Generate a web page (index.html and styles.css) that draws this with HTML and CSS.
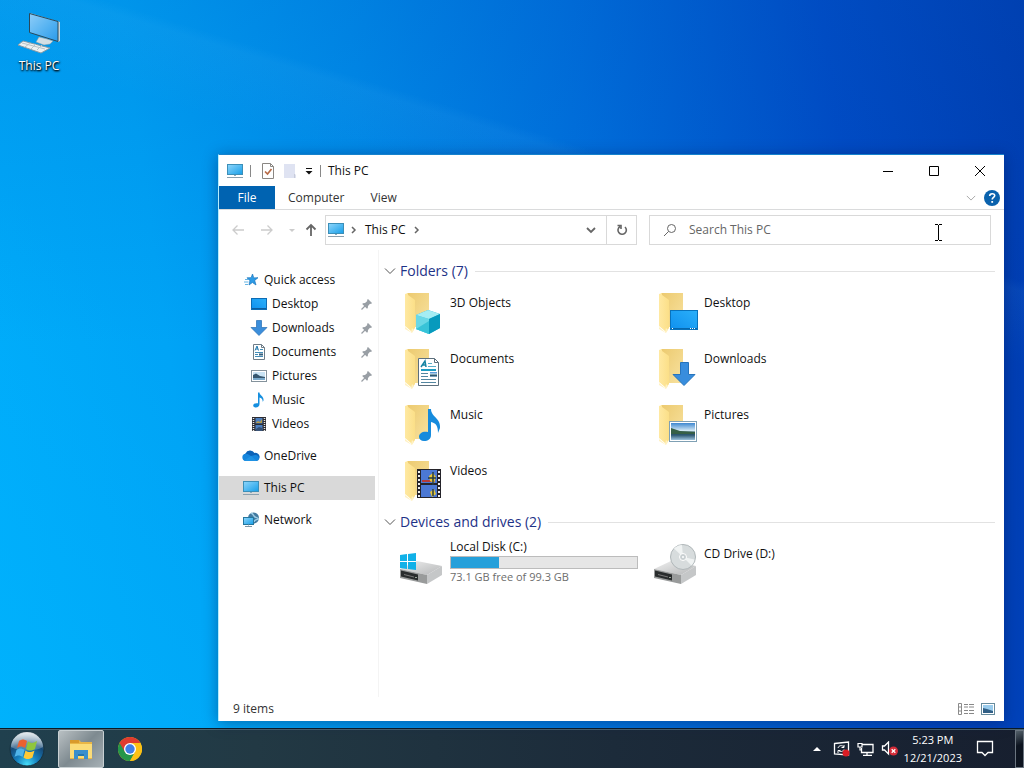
FILE: index.html
```html
<!DOCTYPE html>
<html lang="en">
<head>
<meta charset="utf-8">
<title>This PC</title>
<link rel="stylesheet" href="styles.css">
</head>
<body>
<svg class="defs" width="0" height="0" aria-hidden="true">
  <defs>
    <linearGradient id="g-screen" x1="0" y1="0" x2="1" y2="1"><stop offset="0" stop-color="#8fd6fb"/><stop offset="1" stop-color="#169ee8"/></linearGradient>
    <linearGradient id="g-monitor" x1="0" y1="0" x2="1" y2="1"><stop offset="0" stop-color="#8fcdf8"/><stop offset=".5" stop-color="#5ab5f2"/><stop offset="1" stop-color="#2a9aea"/></linearGradient>
    <linearGradient id="g-blue" x1="0" y1="1" x2="1" y2="0"><stop offset="0" stop-color="#0f90ee"/><stop offset="1" stop-color="#2bb0fa"/></linearGradient>
    <linearGradient id="g-fold" x1="0" y1="0" x2="1" y2="0"><stop offset="0" stop-color="#ffe9a2"/><stop offset="1" stop-color="#fbdf88"/></linearGradient>
    <linearGradient id="g-back" x1="0" y1="0" x2="1" y2="1"><stop offset="0" stop-color="#ecca6f"/><stop offset="1" stop-color="#f8e2a0"/></linearGradient>
    <linearGradient id="g-photo" x1="0" y1="0" x2="0" y2="1"><stop offset="0" stop-color="#3d87d0"/><stop offset=".45" stop-color="#d4e9f5"/><stop offset=".55" stop-color="#345f68"/><stop offset=".7" stop-color="#2b5570"/><stop offset="1" stop-color="#9bc2dc"/></linearGradient>
    <linearGradient id="g-drive" x1="0" y1="0" x2="1" y2="1"><stop offset="0" stop-color="#f0f0f0"/><stop offset="1" stop-color="#b4b6b7"/></linearGradient>
    <radialGradient id="g-orb" cx=".5" cy=".95" r=".9"><stop offset="0" stop-color="#45dcf8"/><stop offset=".35" stop-color="#1681c0"/><stop offset=".7" stop-color="#164a78"/><stop offset="1" stop-color="#7d9cae"/></radialGradient>
    <linearGradient id="g-gloss" x1="0" y1="0" x2="0" y2="1"><stop offset="0" stop-color="#fff" stop-opacity=".8"/><stop offset="1" stop-color="#fff" stop-opacity=".15"/></linearGradient>
  </defs>
  <symbol id="pc" viewBox="0 0 18 16">
    <rect x="1.500" y="1.500" width="15" height="10" fill="url(#g-screen)" stroke="#3c8fb8"/>
    <path d="M8 12h2v1H8z" fill="#8ba9bb"/><path d="M1 14.500h16" stroke="#8ba0ae"/>
  </symbol>
  <symbol id="star" viewBox="0 0 16 16">
    <path d="M9.500 2l1.300 3.900 4.200-.2-3.300 2.700 1.300 4.600-3.600-2.500L6 13l.9-4.300-2.900-2.900 4.100-.1z" fill="#2d9be6" stroke="#1b76bd" stroke-width=".7"/>
    <path d="M2 7.500h3M1 10h4.500M2 12.500h3" stroke="#66b5e5"/>
  </symbol>
  <symbol id="desk" viewBox="0 0 18 16">
    <rect x="1.500" y="2.500" width="15" height="11" fill="url(#g-blue)" stroke="#0d6cb4"/>
    <path d="M2 12.500h14" stroke="#0d5c9d"/>
  </symbol>
  <symbol id="down" viewBox="0 0 18 16"><path d="M6.500 .5h5v7H17L9 15.500 1 7.500h5.500z" fill="#3b8edb" stroke="#256fb5" stroke-width=".7"/></symbol>
  <symbol id="doc" viewBox="0 0 18 16">
    <path d="M3.500.5h8l3 3v12h-11z" fill="#fff" stroke="#6e7d88"/><path d="M11.500.5v3h3" fill="none" stroke="#6e7d88"/>
    <path d="M5 6.500L7 2l1.500 4.500M6 5h2" fill="none" stroke="#2179ae"/><path d="M10 5.500h3M5 8.500h8M5 10.500h3M5 12.500h8" stroke="#438db7"/><rect x="9" y="9.500" width="4" height="2" fill="#355f7c"/>
  </symbol>
  <symbol id="pic" viewBox="0 0 18 16">
    <rect x="1.500" y="2.500" width="15" height="11" fill="#fff" stroke="#84929c"/><rect x="3" y="4" width="12" height="8" fill="#c9e3f4"/>
    <path d="M3 7l3-1.500 4 2.500 5 1v1H3z" fill="#35566f"/><path d="M3 10h12v2H3z" fill="#79a9cb"/>
  </symbol>
  <symbol id="music" viewBox="0 0 18 16"><path d="M8 .5h1.500c0 3 4.500 3.500 4 8l-.8 1.500C13 7.500 11.500 6 9.500 5.500V12c0 2-1.500 3.500-3.700 3.500-1.500 0-2.600-.8-2.600-2 0-1.600 2-2.600 4.800-2.200z" fill="#168fdf"/></symbol>
  <symbol id="film" viewBox="0 0 18 16">
    <path d="M2 1h14v14H2z" fill="#2c2c32"/><path d="M3.500 2v13M14.500 2v13" stroke="#e7e7e7" stroke-width="1.500" stroke-dasharray="1 1"/>
    <path d="M5.500 2h7v5.500h-7zM5.500 9h7v5.500h-7z" fill="#4c7fc0"/><path d="M6 6.500l2-1.500 2 1 2-3v4H6z" fill="#b59b4c"/><path d="M6 13l3-2 3 1v2H6z" fill="#334f73"/>
  </symbol>
  <symbol id="cloud" viewBox="0 0 18 16">
    <path d="M4 13a4 4 0 0 1-.5-7.500A5 5 0 0 1 12.500 5 4 4 0 0 1 14.500 13z" fill="#0c63b8"/>
    <path d="M4 13a3.600 3.600 0 0 1 0-7.300c2 0 3 1 5 2.300l3-.8c3-.8 5 .8 5 3A2.800 2.800 0 0 1 14.500 13z" fill="#1686dd"/>
    <path d="M2 12.500L9 8l6 5H4z" fill="#1f92e4"/>
  </symbol>
  <symbol id="net" viewBox="0 0 18 16">
    <circle cx="11.500" cy="6" r="5.500" fill="#427aa0"/><path d="M9 1c3 1 2 3 4 4s4 1 3 3M12 10c0-2 2-2 4-3" stroke="#9dcce4" fill="none" stroke-width="1.500"/>
    <rect x="1.500" y="5.500" width="10" height="7" fill="url(#g-screen)" stroke="#24779f"/><path d="M3 14.500h7M6 13h1" stroke="#7e96a5"/>
  </symbol>
  <symbol id="pin" viewBox="0 0 12 12"><path d="M7 1l4 4-1 1-1-.3L7 8l-.2 2L6 10.800 1.200 6 2 5.200 4 5l2.300-2L6 2z" fill="#999fa5"/><path d="M4 8L.5 11.500" stroke="#999fa5" stroke-width="1.300"/></symbol>
  <symbol id="folder" viewBox="0 -1 48 48">
    <path d="M11 4h22v34H16z" fill="url(#g-back)"/><path d="M9 5l3-1v2l7 5v28l-3 4-1-1-6-5z" fill="url(#g-fold)"/>
    <path d="M9 38l6 5 1-4 2 2-2 3-7-4z" fill="#fff1c2"/>
  </symbol>
  <symbol id="drive" viewBox="0 1 48 48">
    <path d="M4 31l17-8 25 5-15 9z" fill="url(#g-drive)"/><path d="M4 31l27 6v9L4 40z" fill="#999b9b"/><path d="M31 37l15-9v9l-15 9z" fill="#c5c7c8"/>
    <path d="M5 32.500l17 4v6L5 38.500z" fill="#292c2d"/><path d="M8 36.500l10 2.500" stroke="#777"/><path d="M19 39.500h2" stroke="#9aa79a"/>
  </symbol>
  <symbol id="chev" viewBox="0 0 12 12"><path d="M1 3.500l5 5 5-5" fill="none" stroke="currentColor"/></symbol>
</svg>

<main class="desktop">
  <a class="shortcut" href="#">
    <svg width="48" height="48" viewBox="0 0 48 48" aria-hidden="true">
      <path d="M15 3l30 9v19l-2 1z" fill="#c6d6dc"/><path d="M14.500 3.500l28.500 8v20l-28.500-9z" fill="url(#g-monitor)" stroke="#29495b"/>
      <path d="M24 27l8 2 6 2-3 3-6 1-8-3z" fill="#d4dfe4" stroke="#8d9ba2" stroke-width=".5"/>
      <path d="M8 31l27 7-9 5L3 35z" fill="#edf1f1" stroke="#889ba6"/><path d="M7 33l23 6M15 33l-5 4m11-3-5 5m11-4-5 5" stroke="#b8c3c8"/>
    </svg>
    <span>This PC</span>
  </a>

  <section class="window" aria-label="This PC">
    <header class="titlebar">
      <svg class="i18" aria-hidden="true"><use href="#pc"/></svg><i class="sep"></i>
      <button class="quick" aria-label="Properties"><svg width="14" height="16" viewBox="0 0 14 16"><path d="M1.500.5h8l3 3v12h-11z" fill="#fff" stroke="#8a8783"/><path d="M9.500.5v3h3" fill="none" stroke="#8a8783"/><path d="M4 8.500l2.500 2.500L10.500 6" fill="none" stroke="#b76b47" stroke-width="1.700"/></svg></button>
      <button class="quick" aria-label="New folder"><svg width="14" height="16" viewBox="0 0 14 16"><path d="M1 1h11v10l1 1v3H1z" fill="#dfe3f2"/><path d="M11.500 11v4" stroke="#c7cbd9"/></svg></button>
      <button class="quick narrow" aria-label="Customize toolbar"><svg width="8" height="8" viewBox="0 0 8 8"><path d="M1 1.500h6" stroke="#111"/><path d="M.5 4h7L4 7.500z" fill="#111"/></svg></button>
      <i class="sep second"></i><h1>This PC</h1>
      <div class="controls">
        <button aria-label="Minimize"><svg width="12" height="12"><path d="M1 6.500h10" stroke="#000"/></svg></button>
        <button aria-label="Maximize"><svg width="12" height="12"><path d="M1.500 1.500h9v9h-9z" fill="none" stroke="#000"/></svg></button>
        <button aria-label="Close"><svg width="12" height="12"><path d="M1 1l10 10M11 1L1 11" stroke="#000"/></svg></button>
      </div>
    </header>
    <nav class="ribbon">
      <button class="file">File</button><button>Computer</button><button>View</button>
      <div class="ribbon-end">
        <button aria-label="Expand ribbon"><svg width="10" height="10"><use href="#chev"/></svg></button>
        <button aria-label="Help"><svg width="16" height="16" viewBox="0 0 16 16"><circle cx="8" cy="8" r="8" fill="#0a62ad"/><path d="M5.700 6c0-3 5-3 5-.4C10.700 7.400 8.200 7.300 8.200 9.500" fill="none" stroke="#fff" stroke-width="1.600"/><path d="M7.300 11h1.800v1.800H7.300z" fill="#fff"/></svg></button>
      </div>
    </nav>
    <div class="address-row">
      <div class="history">
        <button class="faint" aria-label="Back"><svg width="14" height="12"><path d="M13 6H2m4.500-4.500L2 6l4.500 4.500" fill="none" stroke="currentColor" stroke-width="1.300"/></svg></button>
        <button class="faint" aria-label="Forward"><svg width="14" height="12"><path d="M1 6h11M7.500 1.500L12 6l-4.500 4.500" fill="none" stroke="currentColor" stroke-width="1.300"/></svg></button>
        <button class="faint" aria-label="Recent locations"><svg width="6" height="6"><path d="M0 2l3 3 3-3z" fill="currentColor"/></svg></button>
        <button class="up" aria-label="Up"><svg width="12" height="14"><path d="M6 13V2M1.500 6.500L6 2l4.500 4.500" fill="none" stroke="currentColor" stroke-width="1.800"/></svg></button>
      </div>
      <div class="address">
        <svg class="i18" aria-hidden="true"><use href="#pc"/></svg>
        <svg class="crumb" width="6" height="8"><path d="M1 1l3 3-3 3" fill="none" stroke="currentColor" stroke-width="1.500"/></svg>
        <a href="#">This PC</a>
        <svg class="crumb" width="6" height="8"><path d="M1 1l3 3-3 3" fill="none" stroke="currentColor" stroke-width="1.500"/></svg>
        <button class="drop" aria-label="Previous locations"><svg width="10" height="8"><path d="M1 2l4 4 4-4" fill="none" stroke="currentColor" stroke-width="1.800"/></svg></button>
        <button class="refresh" aria-label="Refresh"><svg width="12" height="12"><path d="M9 3a4.200 4.200 0 1 1-5-.5M1.500 1.500H5V5" fill="none" stroke="currentColor" stroke-width="1.600"/></svg></button>
      </div>
      <label class="search">
        <svg width="14" height="14"><circle cx="8.500" cy="5.500" r="4" fill="none" stroke="currentColor"/><path d="M5.500 8.500L1 13" stroke="currentColor"/></svg>
        <input type="text" placeholder="Search This PC" aria-label="Search This PC">
      </label>
    </div>

    <div class="body">
      <nav class="sidebar">
        <a href="#"><svg class="i18"><use href="#star"/></svg><span>Quick access</span></a>
        <a class="sub" href="#"><svg class="i18"><use href="#desk"/></svg><span>Desktop</span><svg class="pin"><use href="#pin"/></svg></a>
        <a class="sub" href="#"><svg class="i18"><use href="#down"/></svg><span>Downloads</span><svg class="pin"><use href="#pin"/></svg></a>
        <a class="sub" href="#"><svg class="i18"><use href="#doc"/></svg><span>Documents</span><svg class="pin"><use href="#pin"/></svg></a>
        <a class="sub" href="#"><svg class="i18"><use href="#pic"/></svg><span>Pictures</span><svg class="pin"><use href="#pin"/></svg></a>
        <a class="sub" href="#"><svg class="i18"><use href="#music"/></svg><span>Music</span></a>
        <a class="sub" href="#"><svg class="i18"><use href="#film"/></svg><span>Videos</span></a>
        <a class="root" href="#"><svg class="i18"><use href="#cloud"/></svg><span>OneDrive</span></a>
        <a class="root current" href="#"><svg class="i18"><use href="#pc"/></svg><span>This PC</span></a>
        <a class="root" href="#"><svg class="i18"><use href="#net"/></svg><span>Network</span></a>
      </nav>
      <div class="content">
        <h2><svg width="12" height="12"><use href="#chev"/></svg>Folders (7)</h2>
        <div class="tiles">
          <a href="#"><svg class="i48" viewBox="0 0 48 48"><use href="#folder"/><path d="M20 27l12-5 12 4v14l-11 6-13-5z" fill="#1eb0d3"/><path d="M20 27l13 4v15l-13-5z" fill="#69d8e6"/><path d="M20 27l12-5 12 4-11 5z" fill="#a5edf3"/><path d="M33 31l11-5v14l-11 6z" fill="#079abd"/><path d="M20 41l13-8v13z" fill="#37c3d8"/></svg><span>3D Objects</span></a>
          <a href="#"><svg class="i48" viewBox="0 0 48 48"><use href="#folder"/><rect x="20.500" y="22.500" width="27" height="19" fill="url(#g-blue)" stroke="#0872bc"/><path d="M21 40.500h26" stroke="#0768ae"/><path d="M22 40.500h1m17 0h1m1 0h1m1 0h1" stroke="#fff"/></svg><span>Desktop</span></a>
          <a href="#"><svg class="i48" viewBox="0 0 48 48"><use href="#folder"/><path d="M22.500 14.500h16l4 4v23h-20z" fill="#fff" stroke="#5c6f7d"/><path d="M38.500 14.500v4h4" fill="none" stroke="#5c6f7d"/><path d="M25 23l4-6 1 6m-4-2h4" fill="none" stroke="#1785a3" stroke-width="1.500"/><path d="M32 19.500h4M32 22.500h8" stroke="#5bacc8"/><path d="M25 26h15" stroke="#1d9bc1" stroke-width="2"/><path d="M25 29.500h7m-7 3h7m-7 3h15m-15 3h15" stroke="#5386a0"/><rect x="34" y="28" width="7" height="5" fill="url(#g-photo)"/></svg><span>Documents</span></a>
          <a href="#"><svg class="i48" viewBox="0 0 48 48"><use href="#folder"/><path d="M30.500 18.500h8v12H45L34 41.500 23 30.500h7.500z" fill="#388ddd" stroke="#2674bd"/></svg><span>Downloads</span></a>
          <a href="#"><svg class="i48" viewBox="0 0 48 48"><use href="#folder"/><path d="M32 9h3c0 8 10 9 9 19l-2 5c0-7-2-10-7-11v13c0 4-3 6-7 6-3 0-5-2-5-4 0-4 4-6 9-5z" fill="#168bdd"/></svg><span>Music</span></a>
          <a href="#"><svg class="i48" viewBox="0 0 48 48"><use href="#folder"/><rect x="19.500" y="21.500" width="27" height="20" fill="#fff" stroke="#7fa0b4"/><rect x="21" y="23" width="24" height="17" fill="url(#g-photo)"/><path d="M21 28l9 3 15 1v2H21z" fill="#365f46"/></svg><span>Pictures</span></a>
          <a href="#"><svg class="i48" viewBox="0 0 48 48"><use href="#folder"/><path d="M21 13h24v29H21z" fill="#24232a"/><path d="M23 15v27M43 15v27" stroke="#eee" stroke-width="2" stroke-dasharray="2 2"/><path d="M25 14h16v13H25zM25 29h16v12H25z" fill="#4b78d4"/><path d="M26 25h13" stroke="#b53b39" stroke-width="2"/><path d="M33 20l4-3 3 4-2 6-4-2zM34 36l4-3 2 5-4 3z" fill="#e7c637"/><path d="M37 16v13M32 22h8M37 33v7" stroke="#263c43" stroke-width="1.500"/></svg><span>Videos</span></a>
        </div>
        <h2><svg width="12" height="12"><use href="#chev"/></svg>Devices and drives (2)</h2>
        <div class="tiles drives">
          <a href="#"><svg class="i48" viewBox="0 0 48 48"><use href="#drive"/><path d="M4 16l7-1v7H4zM12 15l8-1v8h-8zM4 23h7v7l-7-1zM12 23h8v8l-8-1z" fill="#10b1e8"/></svg><span class="disk">Local Disk (C:)<i class="bar"><i></i></i><small>73.1 GB free of 99.3 GB</small></span></a>
          <a class="cd" href="#"><svg class="i48" viewBox="0 0 48 48"><use href="#drive"/><circle cx="33" cy="18" r="12.500" fill="#d7dcdd" stroke="#b0b7b9"/><path d="M33 18L24 9.500a12 12 0 0 1 8-3.500z" fill="#f0f3f3"/><path d="M33 18l8.500 8.500a12 12 0 0 0 3-6z" fill="#f0f3f3"/><circle cx="33" cy="18" r="3.500" fill="#c8cfd1" stroke="#fff"/><circle cx="33" cy="18" r="1" fill="#fff"/></svg><span>CD Drive (D:)</span></a>
        </div>
      </div>
    </div>
    <footer class="status">
      <span>9 items</span>
      <button aria-label="Details view"><svg width="16" height="14" viewBox="0 0 16 14"><path d="M.5 1.500h3v11h-3zM.5 5h3M.5 9h3" fill="none" stroke="#8b8b8b"/><path d="M6 2.500h4m1 0h5M6 5h4m1 0h5M6 8.500h4m1 0h5M6 11.500h4m1 0h5" stroke="#888"/></svg></button>
      <button aria-label="Large icons view"><svg width="14" height="12" viewBox="0 0 14 12"><rect x=".5" y=".5" width="13" height="11" fill="#fff" stroke="#668b9d"/><rect x="2" y="2" width="10" height="8" fill="#9acced"/><path d="M2 5l4 1 6 2v2H2z" fill="#315f86"/></svg></button>
    </footer>
  </section>
  <svg class="cursor" width="9" height="17" viewBox="0 0 9 17" aria-hidden="true"><path d="M1 .5h3m1 0h3M4.500 1v15M1 16.500h3m1 0h3" stroke="#000"/></svg>
</main>

<footer class="taskbar">
  <button class="start" aria-label="Start"><svg width="38" height="38" viewBox="0 0 38 38"><circle cx="19" cy="19" r="17" fill="url(#g-orb)" stroke="#16313f"/><path d="M3 17a16 15 0 0 1 32 0c-9 5-22 5-32 0z" fill="url(#g-gloss)"/>
    <path d="M11 11c3-2 5-2 8 0l-2 7c-3-2-5-2-8 0z" fill="#ec6130"/><path d="M20 11.500c3 2 5 2 9-.5l-2 8c-4 2-6 2-9 0z" fill="#8fc63e"/><path d="M8.500 20c3-2 5-2 8 0l-2 7c-3-2-5-2-8 0z" fill="#50b4e9"/><path d="M17.500 20.500c3 2 5 2 9 0l-2 7c-4 2-6 2-9 0z" fill="#ffc936"/></svg></button>
  <button class="task active" aria-label="File Explorer"><svg width="24" height="22" viewBox="0 0 24 22"><path d="M1 2h9l2 2h11v17H1z" fill="#e9b646"/><path d="M1 2h9v3H1z" fill="#d99a2b"/><path d="M1 6h22v14H1z" fill="#fbdc78"/><path d="M5 12h14v9h-4v-5H9v5H5z" fill="#398fcd"/><path d="M9 16h6v2H9z" fill="#2677ad"/></svg></button>
  <button class="task" aria-label="Google Chrome"><svg width="24" height="24" viewBox="0 0 24 24"><circle cx="12" cy="12" r="12" fill="#fbc116"/><path d="M12 12L1.600 6A12 12 0 0 0 12 24l5-9z" fill="#25964a"/><path d="M1.600 6a12 12 0 0 1 20.800 0H12v6l-5 3z" fill="#df3b2f"/><path d="M12 6h10.400A12 12 0 0 1 12 24l5.200-9z" fill="#fbc116"/><circle cx="12" cy="12" r="6" fill="#fff"/><circle cx="12" cy="12" r="4.700" fill="#3f7fe8"/></svg></button>
  <div class="tray">
    <button aria-label="Show hidden icons"><svg width="8" height="4"><path d="M0 4l4-4 4 4z" fill="#fff"/></svg></button>
    <button aria-label="Security"><svg width="17" height="16" viewBox="0 0 17 16"><path d="M1.500 2.500L15.500 1v13l-14-1z" fill="none" stroke="#fff" stroke-width="1.300"/><path d="M5 7c1-3 4-3 6-1M11 4v2.500H8.500M11 8.500c-1 2.500-4 2.500-5.500 1M5 12V9.500h2.500" fill="none" stroke="#fff"/><circle cx="13" cy="12" r="3.500" fill="#d91d25"/></svg></button>
    <button aria-label="Network"><svg width="17" height="14" viewBox="0 0 17 14"><path d="M5 2.500h11v8H4.500V6M10 11v2M6 13.500h9" fill="none" stroke="#fff" stroke-width="1.300"/><path d="M1 1.500h4v3.500H1zM3 5v3h2" fill="none" stroke="#fff" stroke-width="1.200"/></svg></button>
    <button aria-label="Volume muted"><svg width="18" height="15" viewBox="0 0 18 15"><path d="M1.500 5h2l4-4v12l-4-4h-2z" fill="none" stroke="#fff" stroke-width="1.300"/><circle cx="12.500" cy="10" r="4.500" fill="#d32c38"/><path d="M10.700 8.200l3.600 3.600m0-3.600l-3.600 3.600" stroke="#fff" stroke-width="1.300"/></svg></button>
    <time datetime="2023-12-21T17:23">5:23 PM<br>12/21/2023</time>
    <button class="notice" aria-label="Notifications"><svg width="18" height="17" viewBox="0 0 18 17"><path d="M1.500 1.500h15v11H12L9 15.500l-3-3H1.500z" fill="none" stroke="#fff" stroke-width="1.300"/></svg></button>
    <button class="show" aria-label="Show desktop"></button>
  </div>
</footer>
</body>
</html>
```
FILE: styles.css
```css
* { box-sizing: border-box; }
body {
  margin: 0;
  height: 100vh;
  display: flex;
  flex-direction: column;
  overflow: hidden;
  font: 12px/16px "Open Sans", "Noto Sans", sans-serif;
  color: #111;
  background:
    linear-gradient(197deg, rgba(120, 210, 255, 0) 26%, rgba(120, 210, 255, .06) 27%, rgba(120, 210, 255, 0) 34%),
    linear-gradient(50deg, rgba(0, 190, 255, .35), rgba(0, 190, 255, 0) 30%),
    linear-gradient(180deg, rgba(0, 90, 190, .2), rgba(0, 90, 190, 0) 45%),
    linear-gradient(82deg, #00acfb 0%, #00a4f6 20%, #008cea 40%, #006edc 60%, #0049c4 82%, #003aae 100%);
}
button { border: 0; padding: 0; background: none; font: inherit; color: inherit; display: flex; align-items: center; justify-content: center; }
a { color: inherit; text-decoration: none; }
svg { flex: none; display: block; }
.defs { position: absolute; }
.i18 { width: 18px; height: 16px; }
.i48 { width: 48px; height: 48px; overflow: visible; }

.desktop { position: relative; flex: 1; min-height: 0; }
.shortcut { display: flex; flex-direction: column; align-items: center; width: 78px; padding-top: 10px; color: #fff; text-shadow: 1px 1px 2px #000, 0 1px 2px #000; }
.window {
  position: absolute;
  inset: 154px 20px 7px 218px;
  display: flex;
  flex-direction: column;
  background: #fff;
  border: 1px solid #1682cc;
  border-width: 1px 0 0 1px;
  border-left-color: #b5edfc;
  box-shadow: 0 2px 14px rgba(0, 20, 70, .4);
}
.titlebar { display: flex; align-items: center; height: 31px; padding-left: 7px; }
.sep { width: 1px; height: 12px; margin: 0 6px; background: #888; }
.sep.second { margin: 0 7px 0 3px; }
.quick { width: 22px; height: 22px; }
.quick.narrow { width: 16px; }
h1 { margin: 0; font-size: 12px; font-weight: 400; }
.controls { display: flex; align-self: stretch; margin-left: auto; }
.controls button { width: 46px; }
.controls button:last-child { margin-right: 1px; }
.ribbon { display: flex; height: 24px; border-bottom: 1px solid #dadbdc; color: #333; }
.ribbon button { padding: 0 13px; }
.ribbon .file { width: 56px; background: #0063b1; color: #fff; }
.ribbon-end { display: flex; gap: 8px; margin-left: auto; padding-right: 4px; color: #999; }
.ribbon-end button { padding: 0; }
.address-row { display: flex; padding: 5px 13px 5px 12px; color: #666; }
.history { display: flex; align-items: center; gap: 15px; width: 94px; color: #666; }
.history .faint { color: #ccc; }
.history .up { margin-left: -5px; }
.address { flex: 309; display: flex; align-items: center; height: 30px; padding-left: 1px; border: 1px solid #d9d9d9; }
.address a { color: #111; margin-right: 8px; }
.crumb { margin-left: 6px; margin-right: 8px; }
.address a + .crumb { margin-left: 0; }
.drop { margin-left: auto; padding: 0 10px; height: 28px; }
.refresh { width: 30px; height: 28px; border-left: 1px solid #d9d9d9; }
.search { flex: 327; display: flex; align-items: center; gap: 12px; height: 30px; margin-left: 12px; padding-left: 13px; border: 1px solid #d9d9d9; }
.search input { flex: 1; min-width: 0; border: 0; padding: 0; outline: 0; background: none; font: inherit; }
.search input::placeholder { color: #666; opacity: 1; }
.body { flex: 1; min-height: 0; display: flex; }
.sidebar { width: 160px; padding: 18px 3px 0 0; border-right: 1px solid #f4f4f4; }
.sidebar a { display: flex; align-items: center; gap: 4px; height: 24px; padding-left: 23px; }
.sidebar .sub { padding-left: 31px; }
.sidebar .root { margin-top: 8px; }
.sidebar .current { background: #d9d9d9; }
.pin { width: 12px; height: 12px; margin-left: auto; margin-right: 2px; }
.content { flex: 1; padding: 10px 9px 0 5px; }
h2 { display: flex; align-items: center; gap: 4px; margin: 0; font-size: 14px; line-height: 22px; font-weight: 400; color: #1e3287; }
h2 svg { color: #555; }
h2::after { content: ""; flex: 1; height: 1px; margin-left: 3px; background: #e2e2e2; }
.tiles { display: grid; grid-template-columns: repeat(auto-fill, 254px); grid-auto-rows: 56px; padding: 6px 0 0 12px; margin-bottom: -1px; }
.tiles a { display: flex; gap: 6px; }
.tiles span { padding-top: 7px; }
.drives .disk { display: flex; flex-direction: column; width: 188px; padding-top: 0; }
.bar { height: 13px; margin: 1px 0 0; border: 1px solid #bcbcbc; background: #e6e6e6; }
.bar i { display: block; width: 26%; height: 100%; background: #26a0da; }
small { font-size: 11px; color: #6d6d6d; }
.status { display: flex; align-items: center; gap: 7px; height: 24px; padding: 0 9px 0 14px; color: #333; }
.status span { margin-right: auto; }
.cursor { position: absolute; left: 934px; top: 224px; }

.taskbar { display: flex; align-items: center; height: 40px; background: linear-gradient(90deg, #20404e, #223944 25%, #1c2b3a 60%, #171f2f); border-top: 1px solid #0b1b26; box-shadow: inset 0 1px #4b6470; color: #fff; }
.start { width: 54px; height: 38px; }
.task { width: 46px; height: 38px; margin-left: 4px; }
.task + .task { margin-left: 3px; }
.active { border: 1px solid #c8d0d3; border-radius: 2px; background: linear-gradient(135deg, #b9c0c3, #7e8a90 50%, #a6b0b5); }
.tray { display: flex; align-items: center; gap: 7px; height: 100%; margin-left: auto; }
.tray > button:first-child { margin-right: 5px; }
.tray time { margin-left: -2px; font-size: 11px; text-align: center; line-height: 18px; }
.notice { margin: 0 14px 0 7px; }
.show { width: 9px; height: 38px; border: 1px solid #6b7580; background: linear-gradient(160deg, #53606a, #0d1420 40%); }
```
